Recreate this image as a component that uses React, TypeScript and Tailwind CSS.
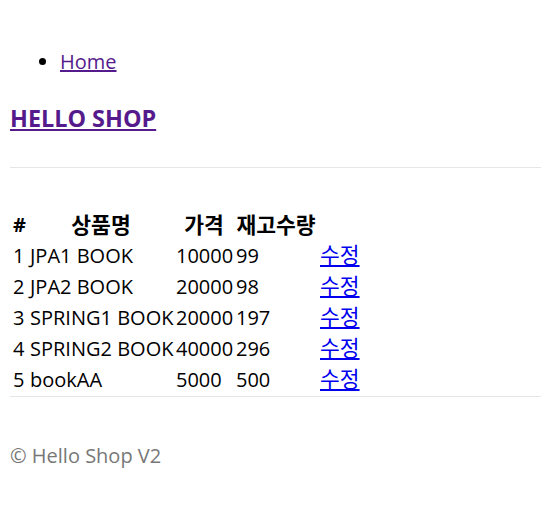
import React from "react";

const items = [
  { id: 1, name: "JPA1 BOOK", price: 10000, stock: 99 },
  { id: 2, name: "JPA2 BOOK", price: 20000, stock: 98 },
  { id: 3, name: "SPRING1 BOOK", price: 20000, stock: 197 },
  { id: 4, name: "SPRING2 BOOK", price: 40000, stock: 296 },
  { id: 5, name: "bookAA", price: 5000, stock: 500 },
];

const App = () => {
  return (
    <div className="min-h-[520px] bg-white pl-[10px] pt-[48px] text-[20px] leading-[27px] text-black font-['Open_Sans','Noto_Sans_CJK_KR',sans-serif]">
      <ul className="list-disc pl-[50px]">
        <li>
          <a href="#" className="text-[#551A8B] underline">
            Home
          </a>
        </li>
      </ul>

      <h3 className="mt-[28px] text-[23.4px] leading-[31px] font-bold">
        <a href="#" className="text-[#551A8B] underline">
          HELLO SHOP
        </a>
      </h3>

      <hr className="mt-[33px] border-[#e6e6e6]" />

      <table className="mt-[40px] w-[353px] table-fixed border-separate border-spacing-[2px] whitespace-nowrap">
        <thead>
          <tr>
            <th className="w-[15px] p-[1px] text-center font-bold">#</th>
            <th className="w-[144px] p-[1px] text-center text-[21.5px] font-bold">상품명</th>
            <th className="w-[58px] p-[1px] text-center text-[21.5px] font-bold">가격</th>
            <th className="w-[82px] p-[1px] text-center text-[21.5px] font-bold">재고수량</th>
            <th className="w-[42px] p-[1px]"></th>
          </tr>
        </thead>
        <tbody>
          {items.map((item) => (
            <tr key={item.id}>
              <td className="p-[1px]">{item.id}</td>
              <td className="p-[1px]">{item.name}</td>
              <td className="p-[1px]">{item.price}</td>
              <td className="p-[1px]">{item.stock}</td>
              <td className="p-[1px]">
                <a href="#" className="text-[21.5px] leading-none text-[#0000EE] underline">
                  수정
                </a>
              </td>
            </tr>
          ))}
        </tbody>
      </table>

      <div className="h-px bg-[#e6e6e6]" />

      <p className="mt-[45px] text-[#777]">© Hello Shop V2</p>
    </div>
  );
};

export default App;
